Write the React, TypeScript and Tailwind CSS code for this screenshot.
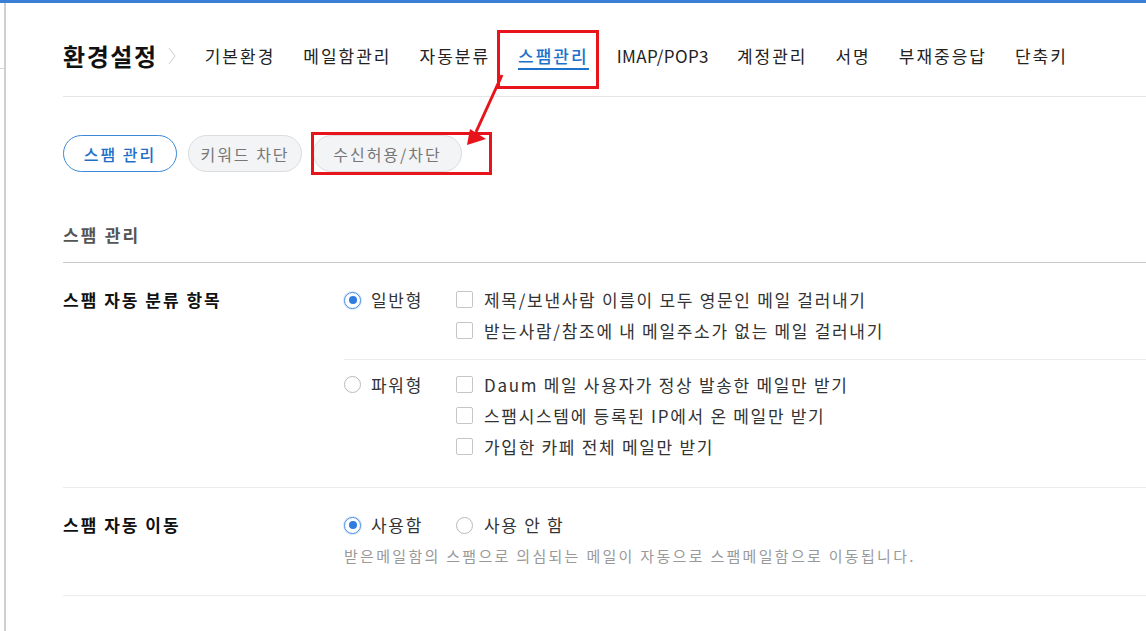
import React from 'react';

const navItems = ['기본환경', '메일함관리', '자동분류', '스팸관리', 'IMAP/POP3', '계정관리', '서명', '부재중응답', '단축키'];

const Radio = ({ checked }: { checked?: boolean }) =>
  checked ? (
    <span className="w-[17px] h-[17px] rounded-full border-[1.5px] border-[#4a8ee6] bg-white flex items-center justify-center shadow-[0_0_0_1px_#d6e6fa] shrink-0">
      <span className="w-[8px] h-[8px] rounded-full bg-[#2f7ce0]" />
    </span>
  ) : (
    <span className="w-[17px] h-[17px] rounded-full border border-[#b9b9b9] bg-white shrink-0" />
  );

const Checkbox = () => <span className="w-[17px] h-[17px] rounded-[2px] border border-[#c6c6c6] bg-white shrink-0" />;

const CheckRow = ({ label }: { label: string }) => (
  <div className="flex items-center h-[31px] gap-[11px]">
    <Checkbox />
    <span>{label}</span>
  </div>
);

export default function App() {
  return (
    <div
      className="relative w-[1146px] h-[631px] overflow-hidden bg-white border-t-[3px] border-[#3a7fd6] flex text-[#222]"
      style={{ fontFamily: "'Noto Sans CJK KR', 'Malgun Gothic', sans-serif" }}
    >
      {/* sidebar edge */}
      <div className="w-[6px] shrink-0 border-r-2 border-[#cfcfcf]">
        <div className="h-[66px] border-b border-[#cfd8e3]" />
      </div>

      <div className="flex-1 pl-[57px]">
        {/* header */}
        <div className="h-[94px] flex items-center pt-[12px] border-b border-[#e6e6e6]">
          <h1 className="text-[24px] font-bold tracking-[1.6px] text-[#111]">환경설정</h1>
          <svg className="ml-[9px] mr-[28px]" width="10" height="20" viewBox="0 0 10 20">
            <path d="M2 2l6 8-6 8" fill="none" stroke="#d8d8d8" strokeWidth="1.2" />
          </svg>
          <nav className="flex items-center gap-[28px] text-[17px] text-[#222] tracking-[2px]">
            {navItems.map((item) =>
              item === '스팸관리' ? (
                <span key={item} className="text-[#1d72cc] font-medium border-b-2 border-[#1d72cc] leading-[24px] pt-[2px]">
                  {item}
                </span>
              ) : item === 'IMAP/POP3' ? (
                <span key={item} className="tracking-[0.4px]">{item}</span>
              ) : (
                <span key={item}>{item}</span>
              )
            )}
          </nav>
        </div>

        {/* sub tabs */}
        <div className="flex gap-[11px] mt-[38px] text-[16px] tracking-[2px]">
          <button className="w-[114px] h-[37px] rounded-full border border-[#3c88d8] text-[#1f6fc6] font-medium bg-white">스팸 관리</button>
          <button className="w-[114px] h-[37px] rounded-full border border-[#dcdcdc] text-[#777] bg-[#f3f4f6]">키워드 차단</button>
          <button className="w-[149px] h-[37px] rounded-full border border-[#dcdcdc] text-[#777] bg-[#f3f4f6]">수신허용/차단</button>
        </div>

        {/* section */}
        <div className="mt-[50px] h-[41px] border-b border-[#c9c9c9] text-[17px] font-semibold text-[#555] tracking-[2.2px]">스팸 관리</div>

        <div className="flex border-b border-[#ececec] pb-[25px]">
          <div className="w-[281px] shrink-0 pt-[21px] leading-[32px] text-[17px] font-bold text-[#111] tracking-[2px]">스팸 자동 분류 항목</div>
          <div className="flex-1 text-[17px] text-[#333] tracking-[1.7px]">
            <div className="flex pt-[21px] pb-[13px] border-b border-[#ececec]">
              <div className="w-[112px] flex items-center h-[32px] gap-[10px]">
                <Radio checked />
                <span>일반형</span>
              </div>
              <div>
                <CheckRow label="제목/보낸사람 이름이 모두 영문인 메일 걸러내기" />
                <CheckRow label="받는사람/참조에 내 메일주소가 없는 메일 걸러내기" />
              </div>
            </div>
            <div className="flex pt-[9px]">
              <div className="w-[112px] flex items-center h-[31px] gap-[10px]">
                <Radio />
                <span>파워형</span>
              </div>
              <div>
                <CheckRow label="Daum 메일 사용자가 정상 발송한 메일만 받기" />
                <CheckRow label="스팸시스템에 등록된 IP에서 온 메일만 받기" />
                <CheckRow label="가입한 카페 전체 메일만 받기" />
              </div>
            </div>
          </div>
        </div>

        <div className="flex border-b border-[#ececec] pt-[21px] pb-[26px]">
          <div className="w-[281px] shrink-0 leading-[32px] text-[17px] font-bold text-[#111] tracking-[2px]">스팸 자동 이동</div>
          <div className="flex-1 text-[17px] text-[#333] tracking-[1.7px]">
            <div className="flex items-center h-[32px]">
              <div className="w-[112px] flex items-center gap-[10px]">
                <Radio checked />
                <span>사용함</span>
              </div>
              <div className="flex items-center gap-[11px]">
                <Radio />
                <span>사용 안 함</span>
              </div>
            </div>
            <p className="mt-[2px] leading-[26px] text-[15px] text-[#999] tracking-[2.3px]">
              받은메일함의 스팸으로 의심되는 메일이 자동으로 스팸메일함으로 이동됩니다.
            </p>
          </div>
        </div>
      </div>

      {/* annotation overlay */}
      <div className="absolute left-[497px] top-[27px] w-[102px] h-[59px] border-[3px] border-[#e8141b]" />
      <div className="absolute left-[311px] top-[129px] w-[181px] h-[43px] border-[3px] border-[#e8141b]" />
      <svg className="absolute left-0 top-0 pointer-events-none" width="1146" height="631">
        <line x1="502" y1="72" x2="476" y2="129" stroke="#e8141b" strokeWidth="3" />
        <polygon points="467,142 470,126 486,136" fill="#e8141b" />
      </svg>
    </div>
  );
}
